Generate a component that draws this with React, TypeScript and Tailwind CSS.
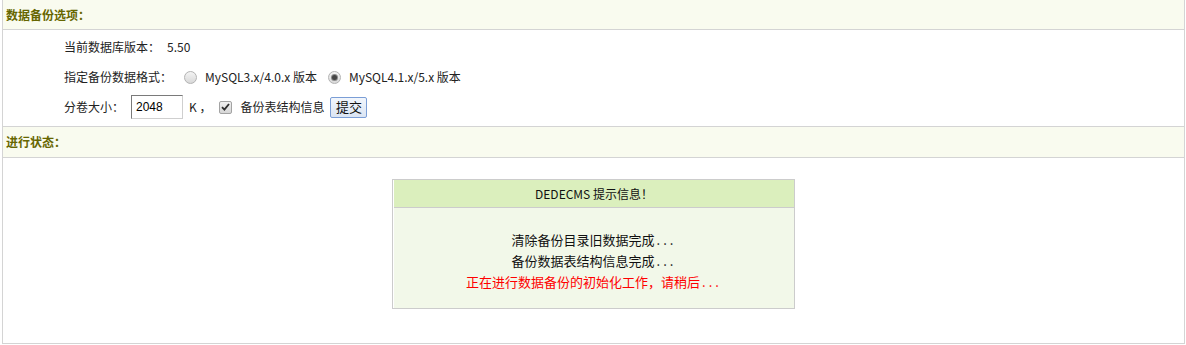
import type { ReactNode } from "react";

const FONT = "font-['SimSun','Noto_Sans_CJK_SC',sans-serif]";

export default function App() {
  return (
    <div className={`bg-white ${FONT} text-[12px] text-[#222]`}>
      <div className="ml-[2px] w-[1183px] border-x border-b border-[#d4d4d4]">
        <SectionTitle>数据备份选项：</SectionTitle>

        <div className="border-b border-[#d4d4d4] pb-[4px] pl-[61px] pt-[2px]">
          <Row>
            <span>当前数据库版本：</span>
            <span className="ml-[7px]">5.50</span>
          </Row>
          <Row>
            <span>指定备份数据格式：</span>
            <Radio className="ml-[12px]" />
            <span className="ml-[8px]">MySQL3.x/4.0.x 版本</span>
            <Radio className="ml-[11px]" checked />
            <span className="ml-[8px]">MySQL4.1.x/5.x 版本</span>
          </Row>
          <Row>
            <span>分卷大小：</span>
            <div className="ml-[7px] flex h-[24px] w-[52px] items-center border border-b-[#cfcfcf] border-l-[#7a7a7a] border-r-[#cfcfcf] border-t-[#7a7a7a] pl-[4px] font-['Liberation_Sans',sans-serif] text-[12px] text-black">
              2048
            </div>
            <span className="ml-[6px]">K ，</span>
            <CheckBox className="ml-[8px]" />
            <span className="ml-[8px]">备份表结构信息</span>
            <button className="ml-[6px] flex h-[21px] w-[37px] items-center justify-center rounded-[2px] border border-[#7b9ed6] bg-gradient-to-b from-[#f2f6fc] to-[#dbe5f3] text-[13px] text-[#111]">
              提交
            </button>
          </Row>
        </div>

        <SectionTitle tall>进行状态：</SectionTitle>

        <div className="flex justify-center pb-[34px] pt-[21px]">
          <div className="w-[403px] border border-[#cccccc] pl-[1px]">
            <div className="flex h-[28px] items-center justify-center border-b border-[#cccccc] bg-[#dbefbd] text-[12px] text-[#111]">
              DEDECMS 提示信息！
            </div>
            <div className="h-[100px] bg-[#f2f8e9] pt-[21px] text-center text-[13px] leading-[21px] text-[#111]">
              <p>
                清除备份目录旧数据完成<Dots />
              </p>
              <p>
                备份数据表结构信息完成<Dots />
              </p>
              <p className="text-[#ff0000]">
                正在进行数据备份的初始化工作，请稍后<Dots />
              </p>
            </div>
          </div>
        </div>
      </div>
    </div>
  );
}

function Dots() {
  return <span className="ml-[2px] tracking-[3px]">...</span>;
}

function SectionTitle({ children, tall }: { children: ReactNode; tall?: boolean }) {
  return (
    <div
      className={`flex ${tall ? "h-[31px]" : "h-[30px]"} items-center border-b border-[#d4d4d4] bg-[#f9fbef] pl-[3px] text-[12px] font-bold text-[#666600]`}
    >
      {children}
    </div>
  );
}

function Row({ children }: { children: ReactNode }) {
  return <div className="flex h-[30px] items-center whitespace-nowrap">{children}</div>;
}

function Radio({ checked, className }: { checked?: boolean; className?: string }) {
  return (
    <span
      className={`${className ?? ""} flex h-[13px] w-[13px] items-center justify-center rounded-full border border-[#b3b3b3] bg-gradient-to-b from-[#f4f4f4] to-[#d8d8d8]`}
    >
      {checked ? <span className="h-[5px] w-[5px] rounded-full bg-[#444] shadow-[0_0_0_1px_#8a8a8a]" /> : null}
    </span>
  );
}

function CheckBox({ className }: { className?: string }) {
  return (
    <span
      className={`${className ?? ""} flex h-[13px] w-[13px] items-center justify-center rounded-[2px] border border-[#a3a3a3] bg-gradient-to-b from-[#f0f0f0] to-[#d6d6d6]`}
    >
      <svg width="9" height="8" viewBox="0 0 9 8">
        <path d="M1 4.2 L3.4 6.6 L8 1" fill="none" stroke="#2d2d2d" strokeWidth="1.8" />
      </svg>
    </span>
  );
}
